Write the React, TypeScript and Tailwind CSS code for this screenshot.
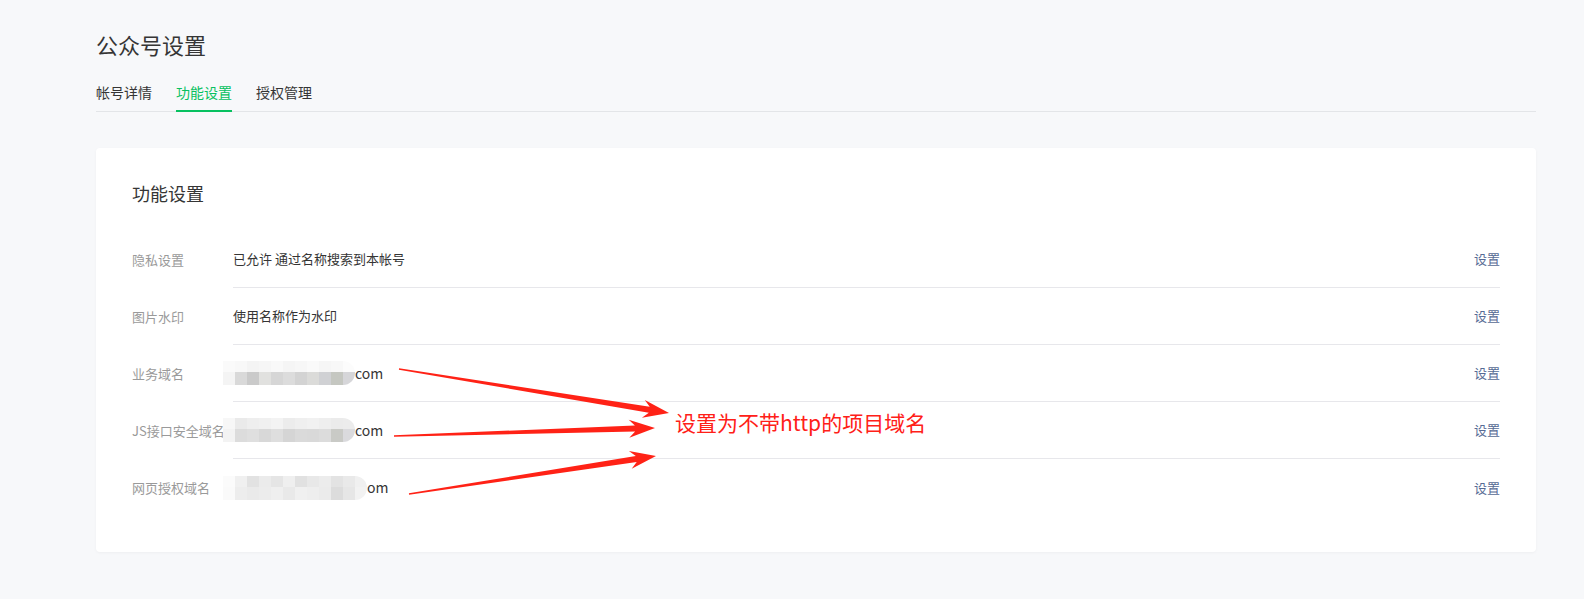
import React from "react";

const FONT = { fontFamily: '"Noto Sans CJK SC", "Noto Sans", sans-serif' };

type Row = { label: string; value?: string; blur?: { top: string[]; bottom: string[] }; tail?: string };

// pixelated placeholder colours (top strip lighter, bottom strip darker)
const blurA = {
    top: ["#fafafa", "#f8f8f8", "#f4f4f4", "#f6f6f6", "#f9f9f9", "#f5f5f5", "#f7f7f7", "#fafafa", "#f6f6f6", "#f8f8f8", "#fcfcfc"],
    bottom: ["#f4f4f4", "#d9d9d9", "#cacaca", "#e1e1df", "#d6d6d6", "#dcdcdc", "#d3d3d3", "#dbdbd9", "#d0d1d4", "#c5c7c1", "#d6d6d9"],
};
const blurB = {
    top: ["#f7f7f7", "#eaeaea", "#eeeeee", "#f0f0f0", "#f3f3f3", "#ececec", "#efefef", "#f1f1f1", "#eeeeee", "#ebebeb", "#ececec"],
    bottom: ["#f3f3f3", "#dcdcdc", "#dfdfdf", "#d8d8d8", "#dedede", "#d5d5d5", "#dadada", "#d9d9d9", "#dcdcdc", "#c9cac6", "#dadadd"],
};
const blurC = {
    top: ["#fbfbfb", "#f0f0f0", "#e2e2e2", "#ebebeb", "#e5e5e5", "#efefef", "#e1e1e1", "#e8e8e8", "#ececec", "#e3e3e3", "#e9e9e9", "#f0f0f0"],
    bottom: ["#fafafa", "#ededed", "#eaeaea", "#ececec", "#efefef", "#e9e9e9", "#f0f0f0", "#eeeeee", "#ebebeb", "#dcdcdc", "#e6e6e6", "#f2f2f2"],
};

const rows: Row[] = [
    { label: "隐私设置", value: "已允许 通过名称搜索到本帐号" },
    { label: "图片水印", value: "使用名称作为水印" },
    { label: "业务域名", blur: blurA, tail: "com" },
    { label: "JS接口安全域名", blur: blurB, tail: "com" },
    { label: "网页授权域名", blur: blurC, tail: "om" },
];

function Mosaic({ top, bottom }: { top: string[]; bottom: string[] }) {
    return (
        <div className="-ml-[10px] flex flex-col overflow-hidden rounded-r-full blur-[0.4px]">
            <div className="flex h-[11px]">
                {top.map((c, i) => (
                    <div key={i} className="h-full w-[12px]" style={{ backgroundColor: c }} />
                ))}
            </div>
            <div className="flex h-[13px]">
                {bottom.map((c, i) => (
                    <div key={i} className="h-full w-[12px]" style={{ backgroundColor: c }} />
                ))}
            </div>
        </div>
    );
}

// polygon of a hand-drawn annotation arrow, thin at the start, thick near the head
function arrowPoints(sx: number, sy: number, tx: number, ty: number) {
    const dx = tx - sx, dy = ty - sy;
    const len = Math.hypot(dx, dy);
    const ux = dx / len, uy = dy / len;
    const nx = -uy, ny = ux;
    const L = 20, W = 9, w0 = 0.8, w1 = 3;
    const bx = tx - ux * L, by = ty - uy * L;
    const cx = tx - ux * (L + 6), cy = ty - uy * (L + 6);
    const pts = [
        [sx + nx * w0, sy + ny * w0],
        [bx + nx * w1, by + ny * w1],
        [cx + nx * W, cy + ny * W],
        [tx, ty],
        [cx - nx * W, cy - ny * W],
        [bx - nx * w1, by - ny * w1],
        [sx - nx * w0, sy - ny * w0],
    ];
    return pts.map(p => p.map(v => v.toFixed(1)).join(",")).join(" ");
}

export default function App() {
    return (
        <div className="relative min-h-screen bg-[#f7f8fa] text-[#353535]" style={FONT}>
            <div className="ml-[96px] mr-[48px] pt-[29px]">
                <h1 className="text-[22px] leading-[30px] font-normal">公众号设置</h1>
                <div className="mt-[23px] flex gap-6 border-b border-[#e3e5e8] text-[14px] leading-[20px]">
                    <div className="pb-2">帐号详情</div>
                    <div className="-mb-px border-b-2 border-[#07c160] pb-2 text-[#07c160]">功能设置</div>
                    <div className="pb-2">授权管理</div>
                </div>

                <div className="mt-[36px] rounded-[4px] bg-white px-9 pt-8 pb-9 shadow-[0_1px_3px_rgba(0,0,0,0.04)]">
                    <h2 className="text-[18px] leading-[26px] font-normal">功能设置</h2>
                    <div className="mt-[25px]">
                        {rows.map((row, i) => (
                            <div key={row.label} className="flex text-[13px]">
                                <div className="flex w-[101px] shrink-0 items-center text-[#9a9a9a]">{row.label}</div>
                                <div className={"flex h-[57px] flex-1 items-center justify-between " + (i < rows.length - 1 ? "border-b border-[#e7e7eb]" : "")}>
                                    <div className="flex items-center">
                                        {row.blur && <Mosaic top={row.blur.top} bottom={row.blur.bottom} />}
                                        {row.value && <span>{row.value}</span>}
                                        {row.tail && <span className="text-[14px]">{row.tail}</span>}
                                    </div>
                                    <a className="text-[#576b95]">设置</a>
                                </div>
                            </div>
                        ))}
                    </div>
                </div>
            </div>

            {/* red annotation drawn over the page */}
            <svg className="pointer-events-none absolute left-0 top-0" width="1584" height="599">
                <polygon points={arrowPoints(399, 369, 669, 413)} fill="#ff2216" />
                <polygon points={arrowPoints(394, 436, 655, 428)} fill="#ff2216" />
                <polygon points={arrowPoints(409, 494, 656, 456)} fill="#ff2216" />
            </svg>
            <div className="absolute left-[675px] top-[408px] text-[21px] leading-[28px] text-[#ff2018]">设置为不带http的项目域名</div>
        </div>
    );
}
